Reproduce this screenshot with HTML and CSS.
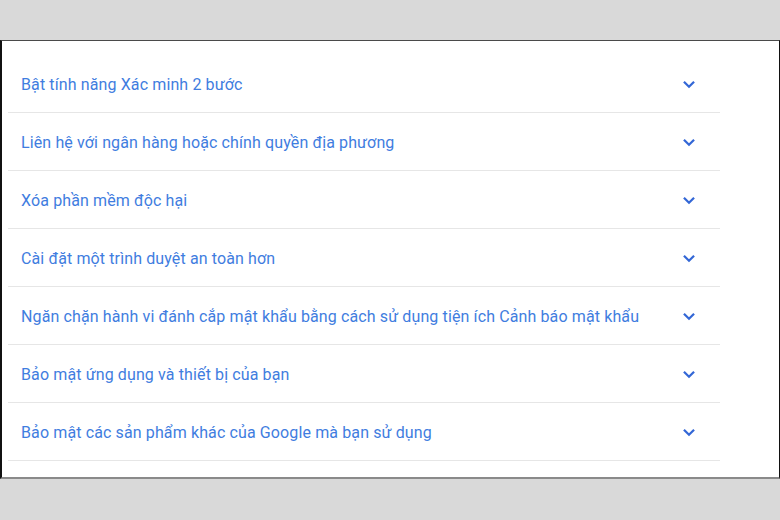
FILE: index.html
```html
<!DOCTYPE html>
<html lang="vi">
<head>
    <meta charset="UTF-8">
    <meta name="viewport" content="width=device-width, initial-scale=1.0">
    <title>Bảo mật tài khoản</title>
    <link rel="stylesheet" href="styles.css">
</head>
<body>
    <div class="panel">
        <ul class="faq-list">
            <li class="faq-item">
                <span class="faq-title">Bật tính năng Xác minh 2 bước</span>
                <svg class="chevron" viewBox="0 0 12 8"><path d="M1.5 1.5 6 6l4.5-4.5"/></svg>
            </li>
            <li class="faq-item">
                <span class="faq-title">Liên hệ với ngân hàng hoặc chính quyền địa phương</span>
                <svg class="chevron" viewBox="0 0 12 8"><path d="M1.5 1.5 6 6l4.5-4.5"/></svg>
            </li>
            <li class="faq-item">
                <span class="faq-title">Xóa phần mềm độc hại</span>
                <svg class="chevron" viewBox="0 0 12 8"><path d="M1.5 1.5 6 6l4.5-4.5"/></svg>
            </li>
            <li class="faq-item">
                <span class="faq-title">Cài đặt một trình duyệt an toàn hơn</span>
                <svg class="chevron" viewBox="0 0 12 8"><path d="M1.5 1.5 6 6l4.5-4.5"/></svg>
            </li>
            <li class="faq-item">
                <span class="faq-title">Ngăn chặn hành vi đánh cắp mật khẩu bằng cách sử dụng tiện ích Cảnh báo mật khẩu</span>
                <svg class="chevron" viewBox="0 0 12 8"><path d="M1.5 1.5 6 6l4.5-4.5"/></svg>
            </li>
            <li class="faq-item">
                <span class="faq-title">Bảo mật ứng dụng và thiết bị của bạn</span>
                <svg class="chevron" viewBox="0 0 12 8"><path d="M1.5 1.5 6 6l4.5-4.5"/></svg>
            </li>
            <li class="faq-item">
                <span class="faq-title">Bảo mật các sản phẩm khác của Google mà bạn sử dụng</span>
                <svg class="chevron" viewBox="0 0 12 8"><path d="M1.5 1.5 6 6l4.5-4.5"/></svg>
            </li>
        </ul>
    </div>
</body>
</html>
```

FILE: styles.css
```css
* {
    box-sizing: border-box;
    margin: 0;
    padding: 0;
}

body {
    font-family: Roboto, 'Liberation Sans', Arial, sans-serif;
    background-color: #d9d9d9;
    padding-top: 40px;
    height: 520px;
    overflow: hidden;
}

.panel {
    background-color: white;
    height: 439px;
    border-top: 1px solid #4a4a4a;
    border-left: 2px solid #111;
    border-right: 1px solid #111;
    border-bottom: 2px solid #8a8a8a;
    padding: 14px 0 0 6px;
}

.faq-list {
    list-style: none;
    width: 712px;
}

.faq-item {
    display: flex;
    align-items: center;
    justify-content: space-between;
    height: 58px;
    padding: 0 24px 0 13px;
    border-bottom: 1px solid #e6e6e6;
}

.faq-title {
    font-size: 16px;
    letter-spacing: 0.12px;
    color: #3f7de0;
    padding-top: 2px;
}

.chevron {
    width: 14px;
    height: 9px;
    fill: none;
    stroke: #3367d6;
    stroke-width: 2;
    margin-top: 2px;
}
```
